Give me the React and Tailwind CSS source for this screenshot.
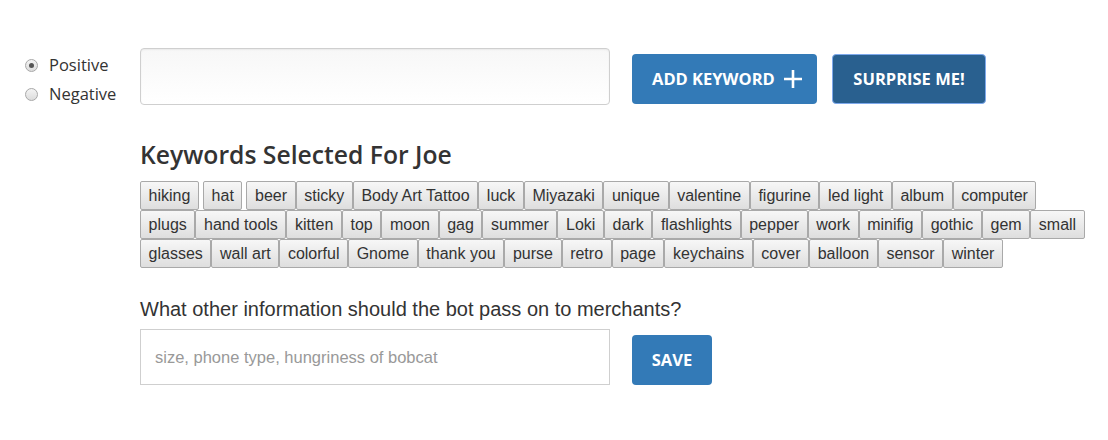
import { useState } from "react";

const keywords = [
  "hiking", "hat", "beer", "sticky", "Body Art Tattoo", "luck", "Miyazaki", "unique", "valentine", "figurine", "led light", "album", "computer",
  "plugs", "hand tools", "kitten", "top", "moon", "gag", "summer", "Loki", "dark", "flashlights", "pepper", "work", "minifig", "gothic", "gem", "small",
  "glasses", "wall art", "colorful", "Gnome", "thank you", "purse", "retro", "page", "keychains", "cover", "balloon", "sensor", "winter",
];

// first two chips sit a little apart from the rest
const spaced = ["hiking", "hat"];

function Radio({ checked, label, onClick }) {
  return (
    <label onClick={onClick} className="flex items-center h-[29px] cursor-pointer">
      <span className="w-[13px] h-[13px] rounded-full border border-[#a8a8a8] bg-gradient-to-b from-[#f4f4f4] to-[#dcdcdc] flex items-center justify-center">
        {checked && <span className="w-[5px] h-[5px] rounded-full bg-[#555]"></span>}
      </span>
      <span className="ml-[11px] text-[16.5px] text-[#333] font-['Open_Sans',sans-serif]">{label}</span>
    </label>
  );
}

export default function App() {
  const [mode, setMode] = useState("positive");

  return (
    <div className="w-[1108px] h-[440px] bg-white flex pt-[48px]">
      <div className="w-[140px] pl-[25px] pt-[3px]">
        <Radio checked={mode === "positive"} label="Positive" onClick={() => setMode("positive")} />
        <Radio checked={mode === "negative"} label="Negative" onClick={() => setMode("negative")} />
      </div>

      <div className="w-[948px]">
        <div className="flex items-start">
          <input className="w-[470px] h-[57px] rounded-[4px] border border-[#cfcfcf] bg-gradient-to-b from-[#f7f7f7] to-white shadow-[inset_0_1px_2px_rgba(0,0,0,0.06)] outline-none" />
          <button className="ml-[22px] mt-[6px] h-[50px] w-[185px] rounded-[4px] bg-[#337ab7] text-white font-['Open_Sans',sans-serif] font-bold text-[16.5px] flex items-center pl-[20px]">
            ADD KEYWORD
            <svg width="20" height="20" viewBox="0 0 20 20" className="ml-[8px]">
              <path d="M10 1v18M1 10h18" stroke="white" strokeWidth="2.6" />
            </svg>
          </button>
          <button className="ml-[15px] mt-[6px] h-[50px] w-[154px] rounded-[4px] bg-[#29608f] border border-[#7ea9ec] text-white font-['Open_Sans',sans-serif] font-bold text-[16.5px]">
            SURPRISE ME!
          </button>
        </div>

        <h2 className="mt-[34px] leading-[32px] text-[24.7px] font-semibold text-[#333] font-['Open_Sans',sans-serif]">
          Keywords Selected For Joe
        </h2>

        <div className="mt-[10px] flex flex-wrap">
          {keywords.map((k) => (
            <span
              key={k}
              className={`h-[29px] px-[7.6px] border border-[#a9a9a9] rounded-[2px] bg-gradient-to-b from-[#f7f7f7] to-[#dedede] text-[16px] leading-[27px] text-[#333] font-['Liberation_Sans',Arial,sans-serif] whitespace-nowrap ${spaced.includes(k) ? "mr-[4px]" : ""}`}
            >
              {k}
            </span>
          ))}
        </div>

        <p className="mt-[27px] text-[20px] leading-[28px] text-[#333] font-['Liberation_Sans',Arial,sans-serif]">
          What other information should the bot pass on to merchants?
        </p>

        <div className="mt-[6px] flex items-start">
          <input
            placeholder="size, phone type, hungriness of bobcat"
            className="w-[470px] h-[56px] border border-[#cfcfcf] px-[14px] text-[16.5px] text-[#333] placeholder:text-[#999] font-['Liberation_Sans',Arial,sans-serif] outline-none"
          />
          <button className="ml-[22px] mt-[6px] h-[50px] w-[80px] rounded-[4px] bg-[#337ab7] text-white font-['Open_Sans',sans-serif] font-bold text-[16.5px]">
            SAVE
          </button>
        </div>
      </div>
    </div>
  );
}
